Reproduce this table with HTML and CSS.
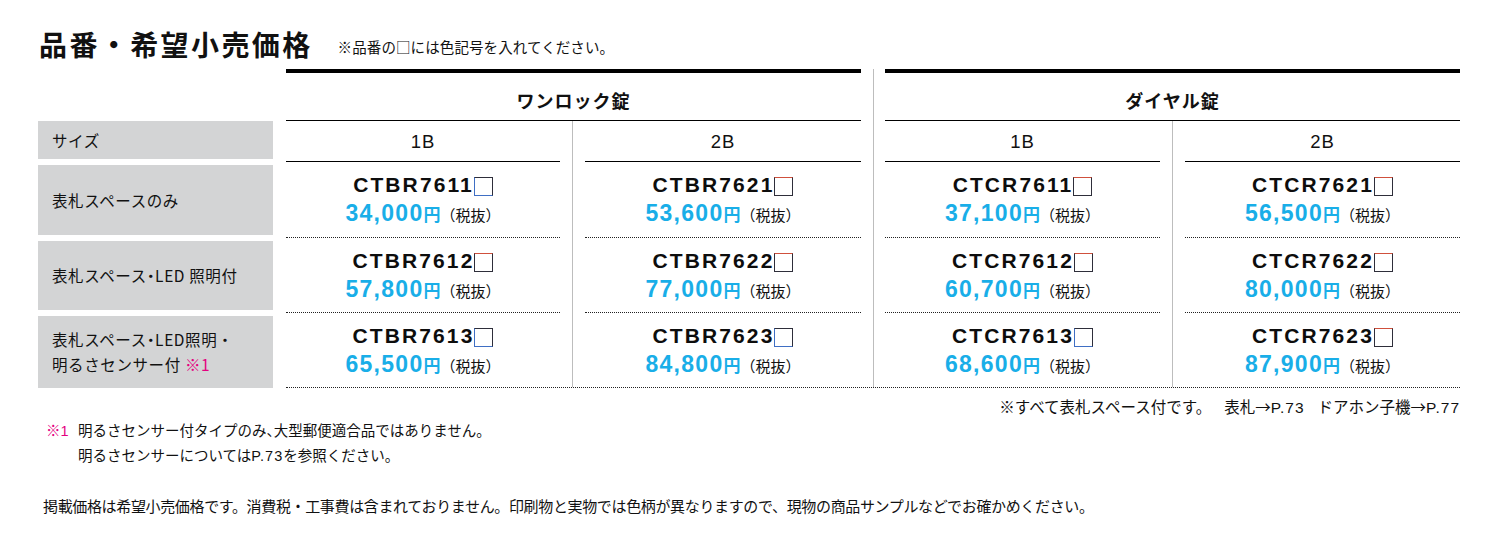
FILE: index.html
```html
<!DOCTYPE html>
<html lang="ja">
<head>
<meta charset="utf-8">
<title>品番・希望小売価格</title>
<link rel="stylesheet" href="styles.css">
</head>
<body>
<div class="page">
  <div class="title-row">
    <h1 class="title">品番・希望小売価格</h1>
    <p class="title-note">※品番の□には色記号を入れてください。</p>
  </div>

  <div class="table">
    <div class="group-head ga">ワンロック錠</div>
    <div class="vsep vsep-group"></div>
    <div class="group-head gb">ダイヤル錠</div>

    <div class="label label-size">サイズ</div>
    <div class="size ca">1B</div>
    <div class="vsep vsep-a"></div>
    <div class="size cb">2B</div>
    <div class="size cc">1B</div>
    <div class="vsep vsep-b"></div>
    <div class="size cd">2B</div>

    <div class="label r3">表札スペースのみ</div>
    <div class="cell ca r3 dotted"><div class="code">CTBR7611<span class="sq blue"></span></div><div class="price"><span class="num">34,000</span><span class="yen">円</span><span class="tax">（税抜）</span></div></div>
    <div class="cell cb r3 dotted"><div class="code">CTBR7621<span class="sq red"></span></div><div class="price"><span class="num">53,600</span><span class="yen">円</span><span class="tax">（税抜）</span></div></div>
    <div class="cell cc r3 dotted"><div class="code">CTCR7611<span class="sq red"></span></div><div class="price"><span class="num">37,100</span><span class="yen">円</span><span class="tax">（税抜）</span></div></div>
    <div class="cell cd r3 dotted"><div class="code">CTCR7621<span class="sq red"></span></div><div class="price"><span class="num">56,500</span><span class="yen">円</span><span class="tax">（税抜）</span></div></div>

    <div class="label r4">表札スペース<span class="half">・</span>LED 照明付</div>
    <div class="cell ca r4 dotted"><div class="code">CTBR7612<span class="sq red"></span></div><div class="price"><span class="num">57,800</span><span class="yen">円</span><span class="tax">（税抜）</span></div></div>
    <div class="cell cb r4 dotted"><div class="code">CTBR7622<span class="sq red"></span></div><div class="price"><span class="num">77,000</span><span class="yen">円</span><span class="tax">（税抜）</span></div></div>
    <div class="cell cc r4 dotted"><div class="code">CTCR7612<span class="sq red"></span></div><div class="price"><span class="num">60,700</span><span class="yen">円</span><span class="tax">（税抜）</span></div></div>
    <div class="cell cd r4 dotted"><div class="code">CTCR7622<span class="sq red"></span></div><div class="price"><span class="num">80,000</span><span class="yen">円</span><span class="tax">（税抜）</span></div></div>

    <div class="label label-last">表札スペース<span class="half">・</span>LED照明・<br>明るさセンサー付<span class="pink"> ※1</span></div>
    <div class="cell ca r5"><div class="code">CTBR7613<span class="sq blue"></span></div><div class="price"><span class="num">65,500</span><span class="yen">円</span><span class="tax">（税抜）</span></div></div>
    <div class="cell cb r5"><div class="code">CTBR7623<span class="sq blue"></span></div><div class="price"><span class="num">84,800</span><span class="yen">円</span><span class="tax">（税抜）</span></div></div>
    <div class="cell cc r5"><div class="code">CTCR7613<span class="sq blue"></span></div><div class="price"><span class="num">68,600</span><span class="yen">円</span><span class="tax">（税抜）</span></div></div>
    <div class="cell cd r5"><div class="code">CTCR7623<span class="sq red"></span></div><div class="price"><span class="num">87,900</span><span class="yen">円</span><span class="tax">（税抜）</span></div></div>

    <div class="bottom-rule"></div>
  </div>

  <div class="note-right">
    <span>※すべて表札スペース付です。</span>
    <span class="ref ref-first">表札→<span class="lat">P.73</span></span>
    <span class="ref">ドアホン子機→<span class="lat">P.77</span></span>
  </div>

  <div class="footnote">
    <span class="mark">※<span class="lat">1</span></span>
    <div class="foot-text">
      <p>明るさセンサー付タイプのみ<span class="half">、</span>大型郵便適合品ではありません。</p>
      <p>明るさセンサーについては<span class="lat">P.73</span>を参照ください。</p>
    </div>
  </div>

  <p class="disclaimer">掲載価格は希望小売価格です。消費税・工事費は含まれておりません。印刷物と実物では色柄が異なりますので、現物の商品サンプルなどでお確かめください。</p>
</div>
</body>
</html>
```

FILE: styles.css
```css
* { box-sizing: border-box; }

body {
  margin: 0;
  background: #ffffff;
  color: #111111;
  font-family: "Noto Sans CJK JP", "Noto Sans", sans-serif;
}

.page {
  width: 1460px;
  padding-left: 38px;
}

/* title */
.title-row {
  display: flex;
  align-items: flex-start;
  height: 69px;
  padding-top: 30px;
  padding-left: 1px;
}

.title {
  margin: 0;
  font-size: 28px;
  line-height: 28px;
  font-weight: 700;
  letter-spacing: 2.4px;
}

.title-note {
  margin: 9px 0 0 25px;
  font-size: 14.5px;
  line-height: 15px;
  letter-spacing: 0.1px;
}

/* table grid */
.table {
  display: grid;
  grid-template-columns: 235px 13px 274px 25px 276px 24px 275px 25px 275px;
  grid-template-rows: 52px 41px 76px 75px 74px 1px;
}

.group-head {
  grid-row: 1;
  border-top: 4px solid #000;
  border-bottom: 1px solid #000;
  display: flex;
  justify-content: center;
  align-items: center;
  padding-top: 7px;
  font-size: 18px;
  font-weight: 700;
  letter-spacing: 1px;
}
.ga { grid-column: 3 / 6; }
.gb { grid-column: 7 / 10; }

.vsep {
  background: linear-gradient(#bdbdbd, #bdbdbd) center / 1px 100% no-repeat;
}
.vsep-group { grid-column: 6; grid-row: 1 / 7; }
.vsep-a { grid-column: 4; grid-row: 2 / 6; }
.vsep-b { grid-column: 8; grid-row: 2 / 6; }

.label {
  grid-column: 1;
  background: #d3d4d5;
  display: flex;
  align-items: center;
  padding-left: 14px;
  font-size: 15.5px;
  line-height: 25px;
  letter-spacing: 0.6px;
  margin: 3px 0;
}
.label-size { grid-row: 2; margin: 0 0 3px; }
.label-last { grid-row: 5 / 7; margin: 3px 0 0; display: block; padding-top: 11px; }
.pink { color: #e4007f; }
.half { font-feature-settings: "halt" 1; }

.size {
  grid-row: 2;
  border-bottom: 1px solid #000;
  display: flex;
  justify-content: center;
  align-items: center;
  padding-top: 1px;
  font-family: "Liberation Sans", Arial, sans-serif;
  font-size: 18.5px;
  letter-spacing: 1px;
}

.ca { grid-column: 3; }
.cb { grid-column: 5; }
.cc { grid-column: 7; }
.cd { grid-column: 9; }
.r3 { grid-row: 3; }
.r4 { grid-row: 4; }
.r5 { grid-row: 5; }

.cell {
  display: flex;
  flex-direction: column;
  align-items: center;
  padding-top: 11px;
}
.dotted { border-bottom: 1px dotted #222; }

.bottom-rule {
  grid-column: 3 / 10;
  grid-row: 6;
  border-top: 1px dotted #222;
}

.code {
  display: flex;
  align-items: center;
  height: 24px;
  font-family: "Liberation Sans", Arial, sans-serif;
  font-weight: 700;
  font-size: 21px;
  letter-spacing: 2.1px;
  color: #0d0d0d;
}

.sq {
  display: inline-block;
  width: 19px;
  height: 19px;
  margin-top: 3px;
  border: 1.5px solid #2e2e3a;
}
.sq.red { border-top-color: #d0503c; }
.sq.blue { border-left-color: #3f6fc4; border-bottom-color: #3f6fc4; }

.price {
  display: flex;
  align-items: baseline;
  height: 28px;
  margin-top: 2px;
  line-height: 28px;
}
.num {
  font-family: "Liberation Sans", Arial, sans-serif;
  font-weight: 700;
  font-size: 23px;
  letter-spacing: 1.3px;
  color: #19aee8;
}
.yen {
  font-size: 17px;
  font-weight: 700;
  color: #19aee8;
}
.tax {
  font-size: 15px;
  color: #111;
}

/* notes */
.note-right {
  display: flex;
  justify-content: flex-end;
  margin-top: 8px;
  font-size: 15.5px;
  line-height: 20px;
}
.ref-first { margin-left: 20px; }
.ref { margin-left: 13px; }
.lat {
  font-family: "Liberation Sans", Arial, sans-serif;
  letter-spacing: 1px;
}
.note-right .lat { font-size: 15.5px; }

.footnote {
  display: flex;
  padding-left: 8px;
  font-size: 14.5px;
  line-height: 24.5px;
}
.mark {
  color: #e4007f;
  width: 32px;
  flex: none;
}
.foot-text p { margin: 0; }

.disclaimer {
  margin: 28px 0 0;
  padding-left: 5px;
  font-size: 15px;
  line-height: 20px;
  letter-spacing: -0.35px;
}
```
